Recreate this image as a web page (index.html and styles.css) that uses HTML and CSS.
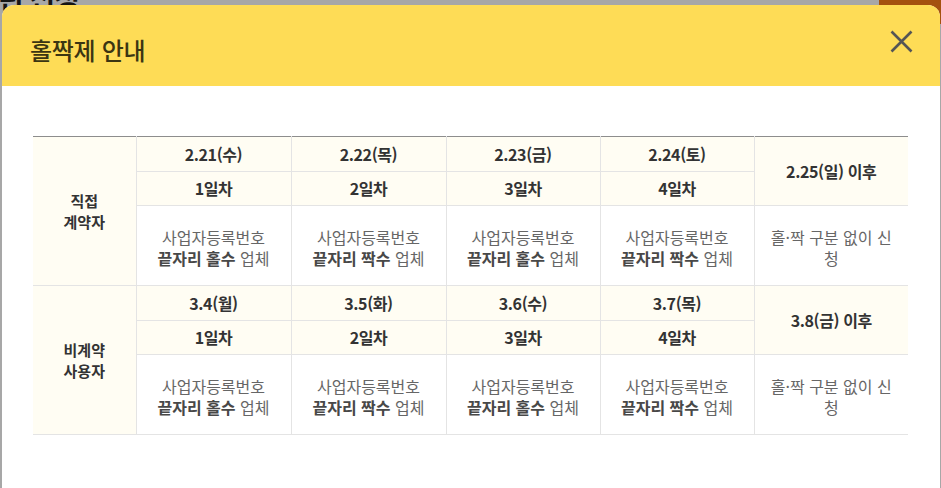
FILE: index.html
```html
<!DOCTYPE html>
<html lang="ko">
<head>
<meta charset="utf-8">
<title>홀짝제 안내</title>
<link rel="stylesheet" href="styles.css">
</head>
<body>
<div class="backdrop">
  <span class="bg-title">린 신청</span>
  <span class="bg-tab"></span>
</div>
<div class="modal">
  <div class="modal-head">
    <h2 class="modal-title">홀짝제 안내</h2>
    <button class="close" aria-label="닫기">
      <svg width="23" height="23" viewBox="0 0 23 23"><path d="M1.5 1.5 L21.5 21.5 M21.5 1.5 L1.5 21.5" stroke="#555" stroke-width="2.6" fill="none"/></svg>
    </button>
  </div>
  <div class="modal-body">
    <table class="sched">
      <colgroup>
        <col class="c-first"><col class="c-day"><col class="c-day"><col class="c-day2"><col class="c-day2"><col>
      </colgroup>
      <tbody>
        <tr class="r-date first">
          <th rowspan="3" class="who">직접<br>계약자</th>
          <td class="hd">2.21(수)</td>
          <td class="hd">2.22(목)</td>
          <td class="hd">2.23(금)</td>
          <td class="hd">2.24(토)</td>
          <td class="hd" rowspan="2">2.25(일) 이후</td>
        </tr>
        <tr class="r-day">
          <td class="hd">1일차</td>
          <td class="hd">2일차</td>
          <td class="hd">3일차</td>
          <td class="hd">4일차</td>
        </tr>
        <tr class="r-desc">
          <td class="desc">사업자등록번호<br><b>끝자리 홀수</b> 업체</td>
          <td class="desc">사업자등록번호<br><b>끝자리 짝수</b> 업체</td>
          <td class="desc">사업자등록번호<br><b>끝자리 홀수</b> 업체</td>
          <td class="desc">사업자등록번호<br><b>끝자리 짝수</b> 업체</td>
          <td class="desc free">홀·짝 구분 없이 신청</td>
        </tr>
        <tr class="r-date">
          <th rowspan="3" class="who">비계약<br>사용자</th>
          <td class="hd">3.4(월)</td>
          <td class="hd">3.5(화)</td>
          <td class="hd">3.6(수)</td>
          <td class="hd">3.7(목)</td>
          <td class="hd" rowspan="2">3.8(금) 이후</td>
        </tr>
        <tr class="r-day">
          <td class="hd">1일차</td>
          <td class="hd">2일차</td>
          <td class="hd">3일차</td>
          <td class="hd">4일차</td>
        </tr>
        <tr class="r-desc">
          <td class="desc">사업자등록번호<br><b>끝자리 홀수</b> 업체</td>
          <td class="desc">사업자등록번호<br><b>끝자리 짝수</b> 업체</td>
          <td class="desc">사업자등록번호<br><b>끝자리 홀수</b> 업체</td>
          <td class="desc">사업자등록번호<br><b>끝자리 짝수</b> 업체</td>
          <td class="desc free">홀·짝 구분 없이 신청</td>
        </tr>
      </tbody>
    </table>
  </div>
</div>
</body>
</html>
```
FILE: styles.css
```css
* { box-sizing: border-box; }
html, body { margin: 0; padding: 0; }
body {
  background: #a7a7a7;
  font-family: "Noto Sans CJK KR", "Noto Sans", sans-serif;
  width: 941px;
  height: 488px;
  overflow: hidden;
  position: relative;
}
.backdrop { position: absolute; inset: 0; }
.bg-title {
  position: absolute;
  left: -2px;
  top: -22px;
  font-size: 28px;
  font-weight: 700;
  color: #151515;
  letter-spacing: -1px;
}
.bg-tab {
  position: absolute;
  right: 0;
  top: 0;
  width: 62px;
  height: 24px;
  background: #a4510f;
}
.modal {
  position: relative;
  margin: 5px 1px 0 2px;
  width: 938px;
  height: 483px;
  background: #fff;
  border-radius: 12px 12px 0 0;
  overflow: hidden;
}
.modal-head {
  height: 81px;
  background: #fedc56;
  display: flex;
  align-items: flex-start;
  justify-content: space-between;
  padding: 27px 27px 0 28px;
}
.modal-title {
  margin: 0;
  font-size: 24px;
  line-height: 36px;
  font-weight: 500;
  color: #3b3512;
  letter-spacing: -0.3px;
}
.close {
  margin-top: -2px;
  padding: 0;
  border: 0;
  background: none;
  width: 23px;
  height: 23px;
  display: block;
}
.close svg { display: block; }
.modal-body {
  padding: 50px 32px 0 31px;
}
.sched {
  width: 875px;
  border-collapse: collapse;
  table-layout: fixed;
  border-bottom: 1px solid #e2e2e2;
}
.c-first { width: 103px; }
.c-day { width: 155px; }
.c-day2 { width: 154px; }
.sched th, .sched td {
  border: 1px solid #e4e4e4;
  text-align: center;
  vertical-align: middle;
  padding: 0;
  font-size: 16px;
  line-height: 21px;
}
.sched tr.first > * { border-top: 1px solid #8d8d8d; }
.sched tr > :first-child { border-left: 0; }
.sched tr > :last-child { border-right: 0; }
.who {
  background: #fffdf3;
  color: #333;
  font-weight: 700;
  font-size: 15px !important;
}
.hd {
  background: #fffdf3;
  color: #333;
  font-weight: 700;
  letter-spacing: -0.4px;
}
.r-date td { height: 35px; }
.r-day td { height: 34px; }
.r-desc td { height: 80px; }
.desc {
  color: #666;
  font-weight: 400;
  padding-top: 4px !important;
}
.desc b { color: #484848; font-weight: 700; }
.free {
  padding: 4px 14px 0 !important;
  word-break: break-all;
}
```
